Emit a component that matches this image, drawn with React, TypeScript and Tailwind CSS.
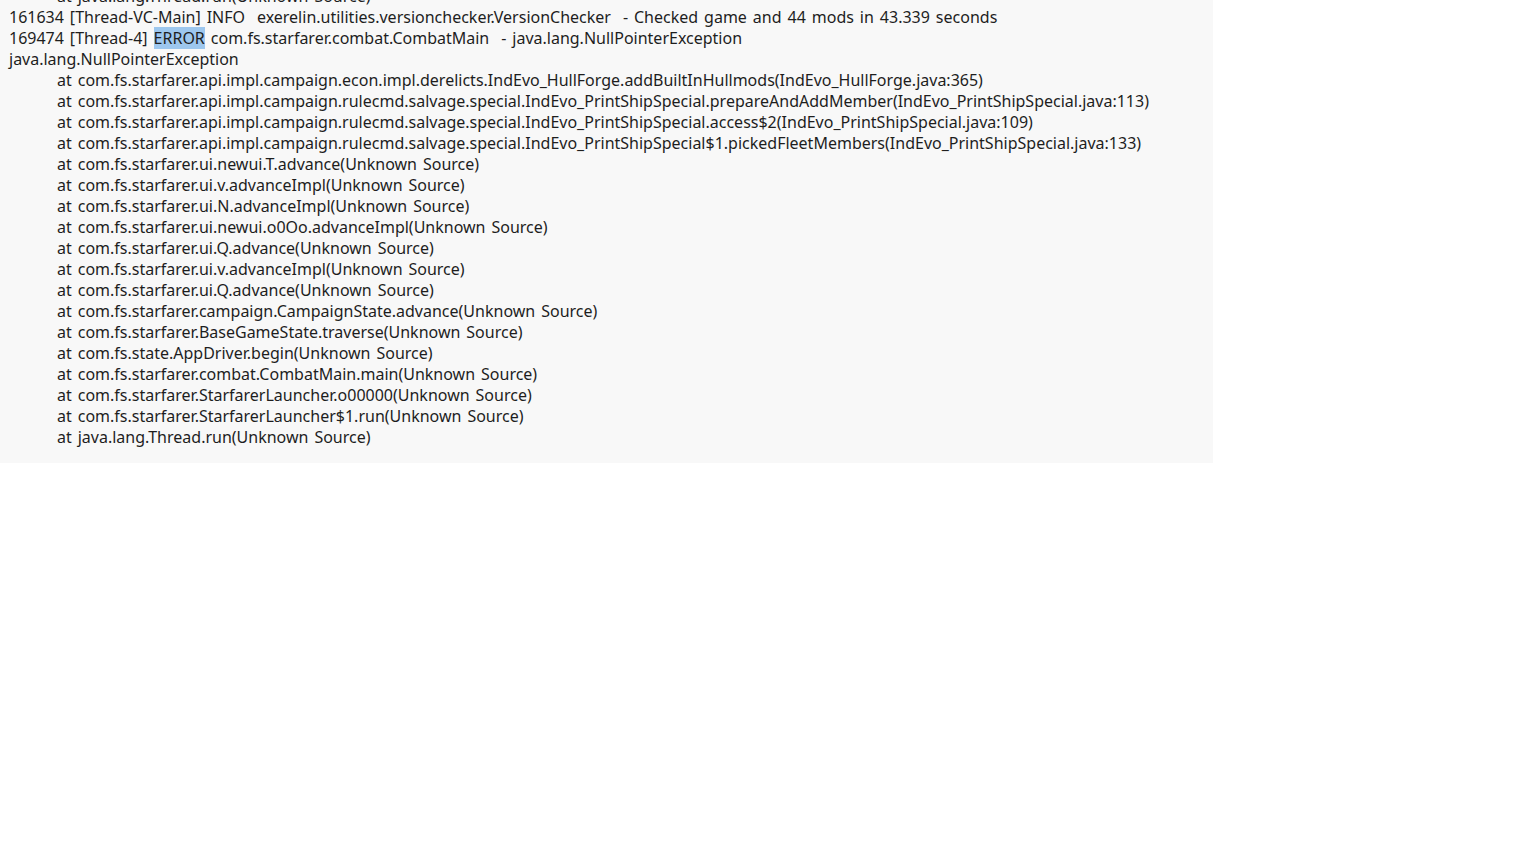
import React from "react";

const stack = [
  "com.fs.starfarer.api.impl.campaign.econ.impl.derelicts.IndEvo_HullForge.addBuiltInHullmods(IndEvo_HullForge.java:365)",
  "com.fs.starfarer.api.impl.campaign.rulecmd.salvage.special.IndEvo_PrintShipSpecial.prepareAndAddMember(IndEvo_PrintShipSpecial.java:113)",
  "com.fs.starfarer.api.impl.campaign.rulecmd.salvage.special.IndEvo_PrintShipSpecial.access$2(IndEvo_PrintShipSpecial.java:109)",
  "com.fs.starfarer.api.impl.campaign.rulecmd.salvage.special.IndEvo_PrintShipSpecial$1.pickedFleetMembers(IndEvo_PrintShipSpecial.java:133)",
  "com.fs.starfarer.ui.newui.T.advance(Unknown Source)",
  "com.fs.starfarer.ui.v.advanceImpl(Unknown Source)",
  "com.fs.starfarer.ui.N.advanceImpl(Unknown Source)",
  "com.fs.starfarer.ui.newui.o0Oo.advanceImpl(Unknown Source)",
  "com.fs.starfarer.ui.Q.advance(Unknown Source)",
  "com.fs.starfarer.ui.v.advanceImpl(Unknown Source)",
  "com.fs.starfarer.ui.Q.advance(Unknown Source)",
  "com.fs.starfarer.campaign.CampaignState.advance(Unknown Source)",
  "com.fs.starfarer.BaseGameState.traverse(Unknown Source)",
  "com.fs.state.AppDriver.begin(Unknown Source)",
  "com.fs.starfarer.combat.CombatMain.main(Unknown Source)",
  "com.fs.starfarer.StarfarerLauncher.o00000(Unknown Source)",
  "com.fs.starfarer.StarfarerLauncher$1.run(Unknown Source)",
  "java.lang.Thread.run(Unknown Source)",
];

// one row of the log, stack frames are tab-indented
const Line = ({ children, indent }: { children: React.ReactNode; indent?: boolean }) => (
  <div className={`h-[21px] leading-[21px] whitespace-pre ${indent ? "pl-[48px]" : ""}`}>{children}</div>
);

const App = () => {
  return (
    <div className="w-full h-[864px] bg-white overflow-hidden">
      <div
        className="w-[1213px] h-[463px] bg-[#f8f8f8] overflow-hidden pl-[9px] text-[#1e1e1e] text-[16px] [word-spacing:1.8px]"
        style={{ fontFamily: '"Noto Sans", "Open Sans", sans-serif' }}
      >
        <div className="-mt-[14px]">
          <Line indent>at java.lang.Thread.run(Unknown Source)</Line>
          <Line>161634 [Thread-VC-Main] INFO  exerelin.utilities.versionchecker.VersionChecker  - Checked game and 44 mods in 43.339 seconds</Line>
          <Line>
            169474 [Thread-4] <span className="bg-[#9dc7ee]">ERROR</span> com.fs.starfarer.combat.CombatMain  - java.lang.NullPointerException
          </Line>
          <Line>java.lang.NullPointerException</Line>
          {stack.map((s, i) => (
            <Line key={i} indent>
              at {s}
            </Line>
          ))}
        </div>
      </div>
    </div>
  );
};

export default App;
